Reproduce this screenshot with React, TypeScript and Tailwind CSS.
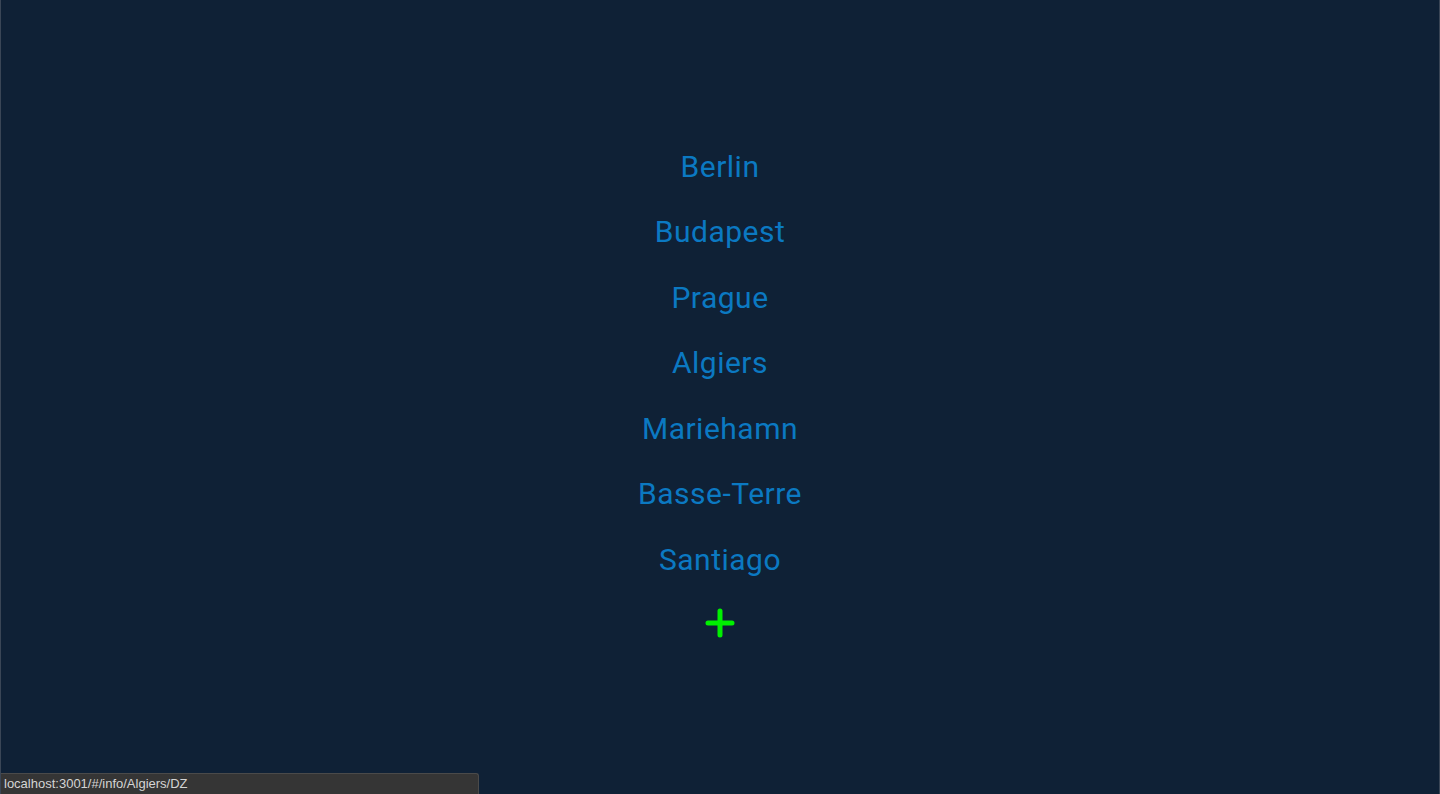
const cities = ["Berlin", "Budapest", "Prague", "Algiers", "Mariehamn", "Basse-Terre", "Santiago"];

function App() {
    return (
        <div className="relative h-[794px] w-full overflow-hidden bg-[#0f2136] border-x border-[#3a4656] font-['Roboto',sans-serif]">
            <ul className="flex flex-col items-center pt-[134px]">
                {cities.map((city) => (
                    <li key={city} className="flex h-[65.5px] items-center">
                        <a href="#" className="text-[30px] leading-none tracking-[0.5px] text-[#0b79c2]">{city}</a>
                    </li>
                ))}
                <li className="flex h-[60px] items-center">
                    <button className="flex items-center justify-center">
                        <svg width="30" height="30" viewBox="0 0 30 30">
                            <path d="M15 3v24M3 15h24" stroke="#00f000" strokeWidth="5" strokeLinecap="round" />
                        </svg>
                    </button>
                </li>
            </ul>
            {/* status bar of the browser */}
            <div className="absolute bottom-0 left-0 flex h-[21px] w-[478px] items-center rounded-tr-[3px] border-t border-r border-[#4a4a4a] bg-[#353535] pl-[3px] font-['Liberation_Sans',sans-serif] text-[13px] text-[#d4d4d4]">
                localhost:3001/#/info/Algiers/DZ
            </div>
        </div>
    );
}

export default App
